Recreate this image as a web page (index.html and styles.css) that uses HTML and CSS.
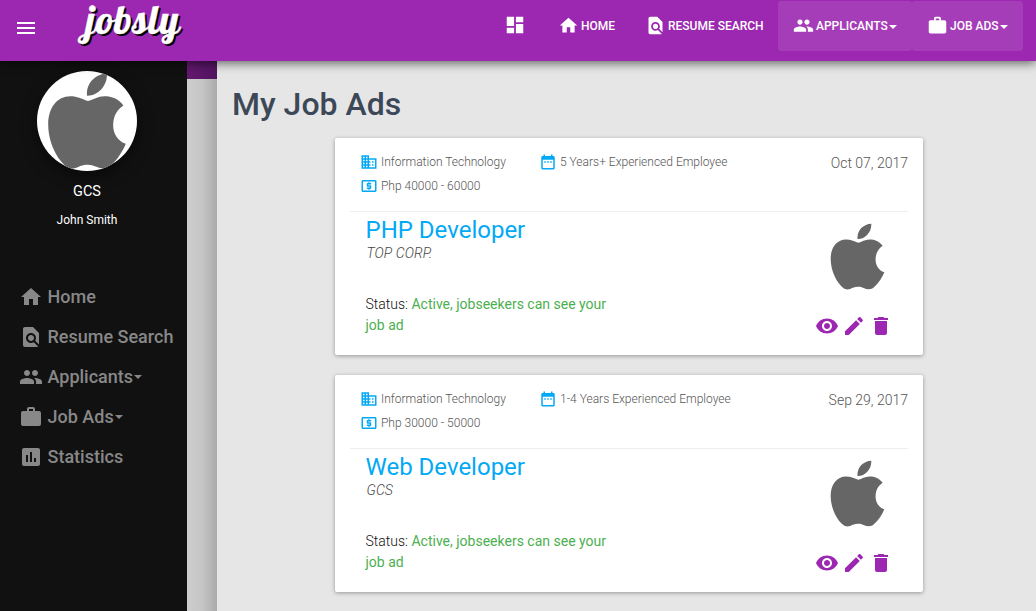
FILE: index.html
```html
<!DOCTYPE html>
<html lang="en">
<head>
<meta charset="utf-8">
<title>My Job Ads</title>
<link rel="stylesheet" href="styles.css">
</head>
<body>
<svg class="defs" aria-hidden="true">
  <symbol id="menu" viewBox="0 0 24 24"><path d="M3 18h18v-2H3v2zm0-5h18v-2H3v2zm0-7v2h18V6H3z"/></symbol>
  <symbol id="dash" viewBox="0 0 24 24"><path d="M3 13h8V3H3v10zm0 8h8v-6H3v6zm10 0h8V11h-8v10zm0-18v6h8V3h-8z"/></symbol>
  <symbol id="home" viewBox="0 0 24 24"><path d="M10 20v-6h4v6h5v-8h3L12 3 2 12h3v8z"/></symbol>
  <symbol id="find" viewBox="0 0 24 24"><path d="M20 19.59V8l-6-6H6c-1.1 0-1.99.9-1.99 2L4 20c0 1.1.89 2 1.99 2H18c.45 0 .85-.15 1.19-.4l-4.43-4.43c-.8.52-1.74.83-2.76.83-2.76 0-5-2.24-5-5s2.24-5 5-5 5 2.24 5 5c0 1.02-.31 1.96-.83 2.75L20 19.59zM9 13c0 1.66 1.34 3 3 3s3-1.34 3-3-1.34-3-3-3-3 1.34-3 3z"/></symbol>
  <symbol id="people" viewBox="0 0 24 24"><path d="M16 11c1.66 0 2.99-1.34 2.99-3S17.66 5 16 5c-1.66 0-3 1.34-3 3s1.34 3 3 3zm-8 0c1.66 0 2.99-1.34 2.99-3S9.66 5 8 5C6.34 5 5 6.34 5 8s1.34 3 3 3zm0 2c-2.33 0-7 1.17-7 3.5V19h14v-2.5c0-2.33-4.67-3.5-7-3.5zm8 0c-.29 0-.62.02-.97.05 1.16.84 1.97 1.97 1.97 3.45V19h6v-2.5c0-2.33-4.67-3.5-7-3.5z"/></symbol>
  <symbol id="work" viewBox="0 0 24 24"><path d="M20 6h-4V4c0-1.11-.89-2-2-2h-4c-1.11 0-2 .89-2 2v2H4c-1.11 0-1.99.89-1.99 2L2 19c0 1.11.89 2 2 2h16c1.11 0 2-.89 2-2V8c0-1.11-.89-2-2-2zm-6 0h-4V4h4v2z"/></symbol>
  <symbol id="stats" viewBox="0 0 24 24"><path d="M19 3H5c-1.1 0-2 .9-2 2v14c0 1.1.9 2 2 2h14c1.1 0 2-.9 2-2V5c0-1.1-.9-2-2-2zM9 17H7v-7h2v7zm4 0h-2V7h2v10zm4 0h-2v-4h2v4z"/></symbol>
  <symbol id="business" viewBox="0 0 24 24"><path d="M12 7V3H2v18h20V7H12zM6 19H4v-2h2v2zm0-4H4v-2h2v2zm0-4H4V9h2v2zm0-4H4V5h2v2zm4 12H8v-2h2v2zm0-4H8v-2h2v2zm0-4H8V9h2v2zm0-4H8V5h2v2zm10 12h-8v-2h2v-2h-2v-2h2v-2h-2V9h8v10zm-2-8h-2v2h2v-2zm0 4h-2v2h2v-2z"/></symbol>
  <symbol id="date" viewBox="0 0 24 24"><path d="M9 11H7v2h2v-2zm4 0h-2v2h2v-2zm4 0h-2v2h2v-2zm2-7h-1V2h-2v2H8V2H6v2H5c-1.11 0-1.99.9-1.99 2L3 20c0 1.1.89 2 2 2h14c1.1 0 2-.9 2-2V6c0-1.1-.9-2-2-2zm0 16H5V9h14v11z"/></symbol>
  <symbol id="money" viewBox="0 0 24 24"><path d="M11 17h2v-1h1c.55 0 1-.45 1-1v-3c0-.55-.45-1-1-1h-3v-1h4V8h-2V7h-2v1h-1c-.55 0-1 .45-1 1v3c0 .55.45 1 1 1h3v1H9v2h2v1zm9-13H4c-1.11 0-1.99.89-1.99 2L2 18c0 1.11.89 2 2 2h16c1.11 0 2-.89 2-2V6c0-1.11-.89-2-2-2zm0 14H4V6h16v12z"/></symbol>
  <symbol id="eye" viewBox="0 0 24 24"><path d="M12 4.5C7 4.5 2.73 7.61 1 12c1.73 4.39 6 7.5 11 7.5s9.27-3.11 11-7.5c-1.73-4.39-6-7.5-11-7.5zM12 17c-2.76 0-5-2.24-5-5s2.24-5 5-5 5 2.24 5 5-2.24 5-5 5zm0-8c-1.66 0-3 1.34-3 3s1.34 3 3 3 3-1.34 3-3-1.34-3-3-3z"/></symbol>
  <symbol id="edit" viewBox="0 0 24 24"><path d="M3 17.25V21h3.75L17.81 9.94l-3.75-3.75L3 17.25zM20.71 7.04c.39-.39.39-1.02 0-1.41l-2.34-2.34c-.39-.39-1.02-.39-1.41 0l-1.83 1.83 3.75 3.75 1.83-1.83z"/></symbol>
  <symbol id="trash" viewBox="0 0 24 24"><path d="M6 19c0 1.1.9 2 2 2h8c1.1 0 2-.9 2-2V7H6v12zM19 4h-3.5l-1-1h-5l-1 1H5v2h14V4z"/></symbol>
  <symbol id="apple" viewBox="0 0 164 198"><path d="M82 47C80 20 100 2 123 1c2 24-18 47-41 46zM84 58C70 53 62 48 48 48 20 48 2 72 2 106c0 39 20 74 38 87 10 8 20 3 28-1 14-5 24-3 32 1 12 5 22 6 31-2 15-13 25-31 31-45-17-6-27-22-26-41 1-17 8-29 21-38-10-14-24-19-39-19-14 0-23 7-34 10z"/></symbol>
</svg>

<header class="topbar">
  <svg class="burger"><use href="#menu"/></svg>
  <div class="logo">jobsly</div>
  <nav class="topnav">
    <a class="tn tn-dash"><svg class="ic"><use href="#dash"/></svg></a>
    <a class="tn tn-home"><svg class="ic"><use href="#home"/></svg><span>HOME</span></a>
    <a class="tn tn-find"><svg class="ic"><use href="#find"/></svg><span>RESUME SEARCH</span></a>
    <a class="tn tn-app on"><svg class="ic"><use href="#people"/></svg><span>APPLICANTS</span><i class="caret"></i></a>
    <a class="tn tn-job on"><svg class="ic"><use href="#work"/></svg><span>JOB ADS</span><i class="caret"></i></a>
  </nav>
</header>

<div class="layout">
  <aside class="sidebar">
    <div class="avatar"><svg class="avatar-logo"><use href="#apple"/></svg></div>
    <div class="company">GCS</div>
    <div class="person">John Smith</div>
    <nav class="sidenav">
      <a><svg><use href="#home"/></svg><span>Home</span></a>
      <a><svg><use href="#find"/></svg><span>Resume Search</span></a>
      <a><svg><use href="#people"/></svg><span>Applicants</span><i class="caret"></i></a>
      <a><svg><use href="#work"/></svg><span>Job Ads</span><i class="caret"></i></a>
      <a><svg><use href="#stats"/></svg><span>Statistics</span></a>
    </nav>
  </aside>
  <div class="gutter"><div class="gutter-top"></div></div>
  <main class="main">
    <h1>My Job Ads</h1>
    <article class="card">
      <div class="meta">
        <div class="tags">
          <div class="tag wide"><svg><use href="#business"/></svg><span>Information Technology</span></div>
          <div class="tag"><svg><use href="#date"/></svg><span>5 Years+ Experienced Employee</span></div>
          <div class="tag"><svg><use href="#money"/></svg><span>Php 40000 - 60000</span></div>
        </div>
        <div class="date">Oct 07, 2017</div>
      </div>
      <div class="content">
        <div class="info">
          <h2>PHP Developer</h2>
          <div class="corp">TOP CORP.</div>
          <p>Status: <span>Active, jobseekers can see your job ad</span></p>
        </div>
        <div class="side">
          <svg class="brand"><use href="#apple"/></svg>
          <div class="actions"><svg><use href="#eye"/></svg><svg><use href="#edit"/></svg><svg><use href="#trash"/></svg></div>
        </div>
      </div>
    </article>
    <article class="card">
      <div class="meta">
        <div class="tags">
          <div class="tag wide"><svg><use href="#business"/></svg><span>Information Technology</span></div>
          <div class="tag"><svg><use href="#date"/></svg><span>1-4 Years Experienced Employee</span></div>
          <div class="tag"><svg><use href="#money"/></svg><span>Php 30000 - 50000</span></div>
        </div>
        <div class="date">Sep 29, 2017</div>
      </div>
      <div class="content">
        <div class="info">
          <h2>Web Developer</h2>
          <div class="corp">GCS</div>
          <p>Status: <span>Active, jobseekers can see your job ad</span></p>
        </div>
        <div class="side">
          <svg class="brand"><use href="#apple"/></svg>
          <div class="actions"><svg><use href="#eye"/></svg><svg><use href="#edit"/></svg><svg><use href="#trash"/></svg></div>
        </div>
      </div>
    </article>
  </main>
</div>
</body>
</html>
```
FILE: styles.css
```css
* { box-sizing: border-box; }
body { margin: 0; height: 611px; overflow: hidden; font-family: Roboto, sans-serif; background: #e6e6e6; }
svg { fill: currentColor; flex: none; display: block; }
.defs { display: none; }

.topbar { position: relative; z-index: 2; height: 61px; display: flex; align-items: flex-start; background: #9c27b0; color: #fff; box-shadow: 0 2px 10px rgba(0,0,0,.6); }
.burger { width: 24px; height: 24px; margin: 16px 0 0 14px; }
.logo { margin: 0 0 0 48px; font: 40px/39px Lobster, "Liberation Serif", serif; letter-spacing: .6px; -webkit-text-stroke: .3px #fff; text-shadow: 2px 2px 0 #000; }
.topnav { display: flex; margin: 1px 13px 0 auto; }
.tn { height: 50px; display: flex; align-items: center; font-size: 12px; font-weight: 500; white-space: nowrap; border-radius: 3px; }
.tn .ic { width: 21px; height: 21px; margin: -2px 2px 0 0; }
.tn-dash .ic { width: 22px; height: 22px; }
.tn-dash { width: 54px; }
.tn-home { width: 87px; }
.tn-find { width: 133px; }
.tn-app { width: 134px; padding-left: 15px; }
.tn-job { width: 111px; padding-left: 15px; }
.on { background: rgba(255,255,255,.1); }
.caret { border: 4px solid transparent; border-top-color: currentColor; border-bottom: 0; margin: 2px 0 0 1px; }

.layout { display: flex; height: 550px; }
.sidebar { width: 187px; background: #111; color: #fff; text-align: center; padding: 10px 0 0; }
.avatar { width: 100px; height: 100px; margin: 0 0 0 37px; border-radius: 50%; background: #fff; overflow: hidden; box-shadow: 0 5px 15px rgba(0,0,0,.5); }
.avatar-logo { width: 80px; height: 96px; margin: 2px 0 0 10px; color: #666; }
.company { margin: 12px 13px 0 0; font-size: 14.5px; line-height: 18px; }
.person { margin: 11px 13px 0 0; font-size: 12px; line-height: 16px; }
.sidenav { margin-top: 48px; color: #888; }
.sidenav a { display: flex; align-items: center; height: 40px; padding-left: 19px; font-size: 18px; font-weight: 500; }
.sidenav svg { width: 24px; height: 24px; margin: 2px 4.5px 0 0; }

.gutter { width: 30px; background: linear-gradient(90deg, #cdcdcd, #c6c6c6 50%, #aaa); }
.gutter-top { height: 18px; background: linear-gradient(90deg, #64196f, #521460); }

.main { flex: 1; padding: 22px 0 0 15px; }
h1 { margin: 0 0 17px; font-size: 32px; line-height: 38px; font-weight: 500; color: #3c4858; padding-top: 2px; }
.card { width: 588px; height: 217px; margin: -2px 0 22px 103px; padding: 12px 15px 0; background: #fff; border-radius: 2px; box-shadow: 0 1px 4px rgba(0,0,0,.35); }
.meta { display: flex; justify-content: space-between; height: 62px; border-bottom: 1px solid #eee; color: #555; font-weight: 300; }
.tags { display: flex; flex-wrap: wrap; align-content: flex-start; width: 400px; padding-left: 10.4px; }
.tag { display: flex; align-items: center; height: 24px; font-size: 12px; white-space: nowrap; }
.wide { width: 179px; }
.tag svg { width: 18px; height: 18px; margin-right: 2.6px; color: #03a9f4; }
.date { font-size: 14px; line-height: 26px; }
.content { display: flex; justify-content: space-between; padding-left: 15.5px; }
.info { width: 260px; }
h2 { margin: 4px 0 0; font-size: 24px; line-height: 28px; font-weight: 400; color: #03a9f4; }
.corp { font-size: 14px; line-height: 18px; font-style: italic; font-weight: 300; color: #444; letter-spacing: .1px; padding-left: 1px; }
p { margin: 32px 0 0; font-size: 14px; line-height: 21px; font-weight: 300; color: #111; }
p span { font-weight: 400; color: #4caf50; }
.side { width: 93px; padding-top: 11px; }
.brand { width: 55px; height: 67px; margin-left: 15px; color: #666; }
.actions { display: flex; gap: 3px; margin-top: 24px; color: #9c27b0; }
.actions svg { width: 24px; height: 24px; }
```
